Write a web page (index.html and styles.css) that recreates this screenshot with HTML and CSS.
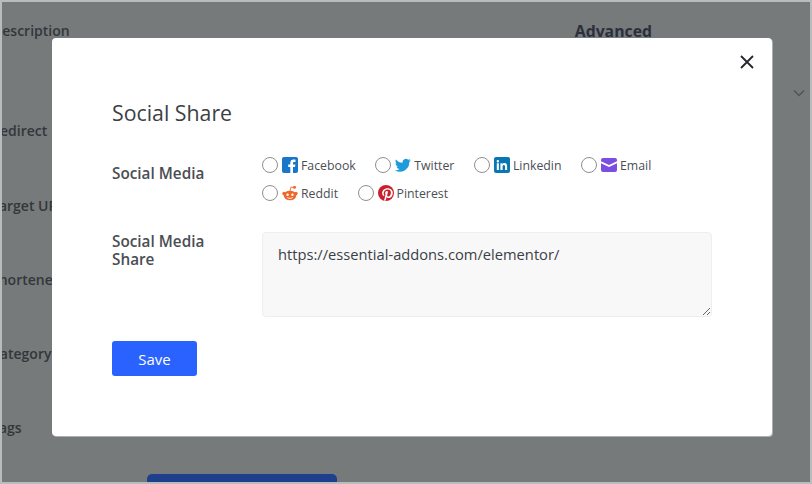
FILE: index.html
```html
<!DOCTYPE html>
<html>

<head>
    <meta charset="UTF-8">
    <title>Social Share</title>
    <link rel="stylesheet" href="styles.css">
</head>
<body>
<div class="frame">
    <div class="page">
        <div class="page-tabs">
            <span class="page-tab">Description</span>
            <span class="page-tab advanced">Advanced</span>
        </div>
        <div class="page-label first">Redirect</div>
        <div class="page-label">Target URL</div>
        <div class="page-label">Shortener</div>
        <div class="page-label">Category</div>
        <div class="page-label">Tags</div>
        <div class="page-button"></div>
        <svg class="page-chevron" width="12" height="8" viewBox="0 0 12 8"><path d="M1 1.5l5 5 5-5" fill="none" stroke="#50545a" stroke-width="1.5"/></svg>
    </div>

    <div class="modal">
        <button class="close" aria-label="Close">
            <svg width="14" height="14" viewBox="0 0 14 14"><path d="M1 1l12 12M13 1L1 13" fill="none" stroke="#24272b" stroke-width="1.8"/></svg>
        </button>
        <h2 class="title">Social Share</h2>

        <div class="form-row media-row">
            <div class="form-label">Social Media</div>
            <div class="options">
                <label class="option">
                    <span class="radio"></span>
                    <svg class="icon" viewBox="0 0 16 16"><rect width="16" height="16" rx="2" fill="#1877c9"/><path d="M11 16v-6h2l.4-2.4H11V6.2c0-.8.3-1.2 1.2-1.2h1.3V2.8c-.5-.1-1.2-.2-1.9-.2-2 0-3.3 1.2-3.3 3.3v1.7H6.2V10h2.1v6z" fill="#fff"/></svg>
                    Facebook
                </label>
                <label class="option">
                    <span class="radio"></span>
                    <svg class="icon" viewBox="0 0 24 24"><path d="M23.6 4.9c-.9.4-1.800.7-2.800.8 1-.6 1.800-1.500 2.100-2.700-.9.6-2 1-3.100 1.200A4.900 4.900 0 0 0 11.500 8.700C7.400 8.500 3.800 6.600 1.400 3.600c-1.300 2.200-.6 5.100 1.500 6.500-.8 0-1.500-.2-2.200-.6 0 2.300 1.600 4.400 3.900 4.900-.7.2-1.500.2-2.200.1.600 2 2.400 3.400 4.600 3.400A9.900 9.900 0 0 1 0 19.900a13.900 13.900 0 0 0 21.400-12.400c1-.7 1.800-1.600 2.200-2.600z" fill="#1d9bdc"/></svg>
                    Twitter
                </label>
                <label class="option">
                    <span class="radio"></span>
                    <svg class="icon" viewBox="0 0 16 16"><rect width="16" height="16" rx="2" fill="#0a77b5"/><path d="M2.800 6.300h2.100V13H2.800zM3.850 3a1.200 1.200 0 1 1 0 2.400 1.200 1.200 0 0 1 0-2.400zM6.400 6.300h2v.9c.4-.6 1.100-1.100 2.100-1.100 2.100 0 2.600 1.400 2.600 3.200V13H11V9.700c0-.8 0-1.800-1.100-1.800s-1.300.8-1.300 1.700V13H6.400z" fill="#fff"/></svg>
                    Linkedin
                </label>
                <label class="option">
                    <span class="radio"></span>
                    <svg class="icon" viewBox="0 0 16 16"><path d="M2 1h12a2 2 0 0 1 2 2v1.200L8 8 0 4.200V3a2 2 0 0 1 2-2z" fill="#7a4fe0"/><path d="M0 6.200l8 3.800 8-3.800V13a2 2 0 0 1-2 2H2a2 2 0 0 1-2-2z" fill="#7a4fe0"/></svg>
                    Email
                </label>
                <label class="option">
                    <span class="radio"></span>
                    <svg class="icon" viewBox="0 0 16 16"><ellipse cx="8" cy="10.500" rx="6.300" ry="4.800" fill="#f0672b"/><circle cx="2" cy="8.500" r="1.700" fill="#f0672b"/><circle cx="14" cy="8.500" r="1.700" fill="#f0672b"/><circle cx="12.500" cy="2.200" r="1.500" fill="#f0672b"/><path d="M8 6l1-4 3 .7" fill="none" stroke="#f0672b" stroke-width=".9"/><circle cx="5.600" cy="9.800" r="1.200" fill="#fff"/><circle cx="10.400" cy="9.800" r="1.200" fill="#fff"/><path d="M5.300 12.600c1.500 1 3.900 1 5.400 0" fill="none" stroke="#fff" stroke-width=".9"/></svg>
                    Reddit
                </label>
                <label class="option">
                    <span class="radio"></span>
                    <svg class="icon" viewBox="0 0 16 16"><circle cx="8" cy="8" r="8" fill="#c8202c"/><path d="M6.200 15l1.300-5.600c-.2-.4-.3-.8-.3-1.300 0-1.200.7-2.100 1.600-2.100.7 0 1.100.6 1.100 1.200 0 .8-.5 1.900-.7 2.900-.2.800.4 1.500 1.200 1.500 1.500 0 2.500-1.900 2.500-4.100 0-1.700-1.200-3-3.300-3-2.400 0-3.900 1.800-3.900 3.800 0 .7.200 1.200.5 1.600.1.200.2.200.1.400l-.2.600c0 .2-.2.300-.4.200-1.100-.5-1.600-1.700-1.600-3 0-2.300 1.900-4.900 5.700-4.900 3 0 5 2.200 5 4.500 0 3.100-1.700 5.400-4.200 5.400-.9 0-1.700-.5-2-1l-.6 2.200c-.2.700-.6 1.500-1 2.100z" fill="#fff"/></svg>
                    Pinterest
                </label>
            </div>
        </div>

        <div class="form-row share-row">
            <div class="form-label">Social Media Share</div>
            <textarea class="share-url">https://essential-addons.com/elementor/</textarea>
        </div>

        <button class="save">Save</button>
    </div>
</div>
</body>
</html>
```

FILE: styles.css
```css
* {
    box-sizing: border-box;
}

html, body {
    margin: 0;
    height: 100%;
}

body {
    font-family: "Open Sans", "Noto Sans", sans-serif;
    color: #3a3f45;
    overflow: hidden;
}

.frame {
    position: relative;
    width: 812px;
    height: 484px;
    overflow: hidden;
    background: #777a7a;
    border: 2px solid #b9bcbc;
}

.page {
    height: 100%;
    color: #33363a;
    font-size: 14px;
    font-weight: 600;
}

.page-tabs {
    display: flex;
    justify-content: space-between;
    height: 92px;
    margin-left: -10px;
    padding: 19px 158px 0 0;
}

.page-tab {
    line-height: 20px;
}

.advanced {
    font-size: 15.800px;
    font-weight: 700;
    color: #2b2f3d;
}

.page-label {
    height: 74px;
    margin-left: -11px;
    line-height: 20px;
    white-space: nowrap;
}

.page-label.first {
    height: 102px;
    padding-top: 27px;
}

.page-button {
    width: 190px;
    height: 20px;
    margin: -18px 0 0 145px;
    background: #1f3f8c;
    border-radius: 5px 5px 0 0;
}

.page-chevron {
    position: absolute;
    top: 87px;
    right: 5px;
}

.modal {
    position: absolute;
    left: 50px;
    top: 36px;
    width: 720px;
    height: 398px;
    padding: 60px 60px 0;
    background: #fff;
    border-radius: 4px;
    box-shadow: 1px 1px 0 rgba(205, 210, 210, .6);
}

.close {
    position: absolute;
    top: 17px;
    right: 18px;
    display: flex;
    width: 14px;
    height: 14px;
    padding: 0;
    border: 0;
    background: none;
}

.title {
    margin: 0 0 23px;
    font-size: 21.300px;
    line-height: 30px;
    font-weight: 500;
    color: #3b3f45;
}

.form-row {
    display: flex;
}

.form-label {
    flex-shrink: 0;
    width: 150px;
    padding-right: 30px;
    font-size: 15.300px;
    line-height: 18px;
    font-weight: 600;
    color: #4a4e54;
}

.media-row .form-label {
    padding-top: 13px;
}

.options {
    display: flex;
    flex-wrap: wrap;
    align-content: flex-start;
    column-gap: 19.500px;
    row-gap: 4px;
    padding-top: 2px;
}

.option {
    display: flex;
    align-items: center;
    height: 24px;
    font-size: 12.300px;
    color: #4b4f55;
}

.radio {
    width: 16px;
    height: 16px;
    margin-right: 4px;
    border: 1px solid #8f8f8f;
    border-radius: 50%;
    background: #fff;
}

.icon {
    width: 16px;
    height: 16px;
    margin-right: 3px;
}

.share-row {
    margin-top: 27px;
}

.share-url {
    display: block;
    width: 450px;
    height: 85px;
    padding: 10px 15px;
    font-family: inherit;
    font-size: 14.700px;
    line-height: 22px;
    color: #3a3f45;
    background: #f8f8f9;
    border: 1px solid #eeeeee;
    border-radius: 4px;
    outline: none;
}

.save {
    display: block;
    width: 85px;
    height: 35px;
    margin-top: 24px;
    padding: 0;
    font-family: inherit;
    font-size: 15px;
    color: #fff;
    background: #2962ff;
    border: 0;
    border-radius: 3px;
}
```
